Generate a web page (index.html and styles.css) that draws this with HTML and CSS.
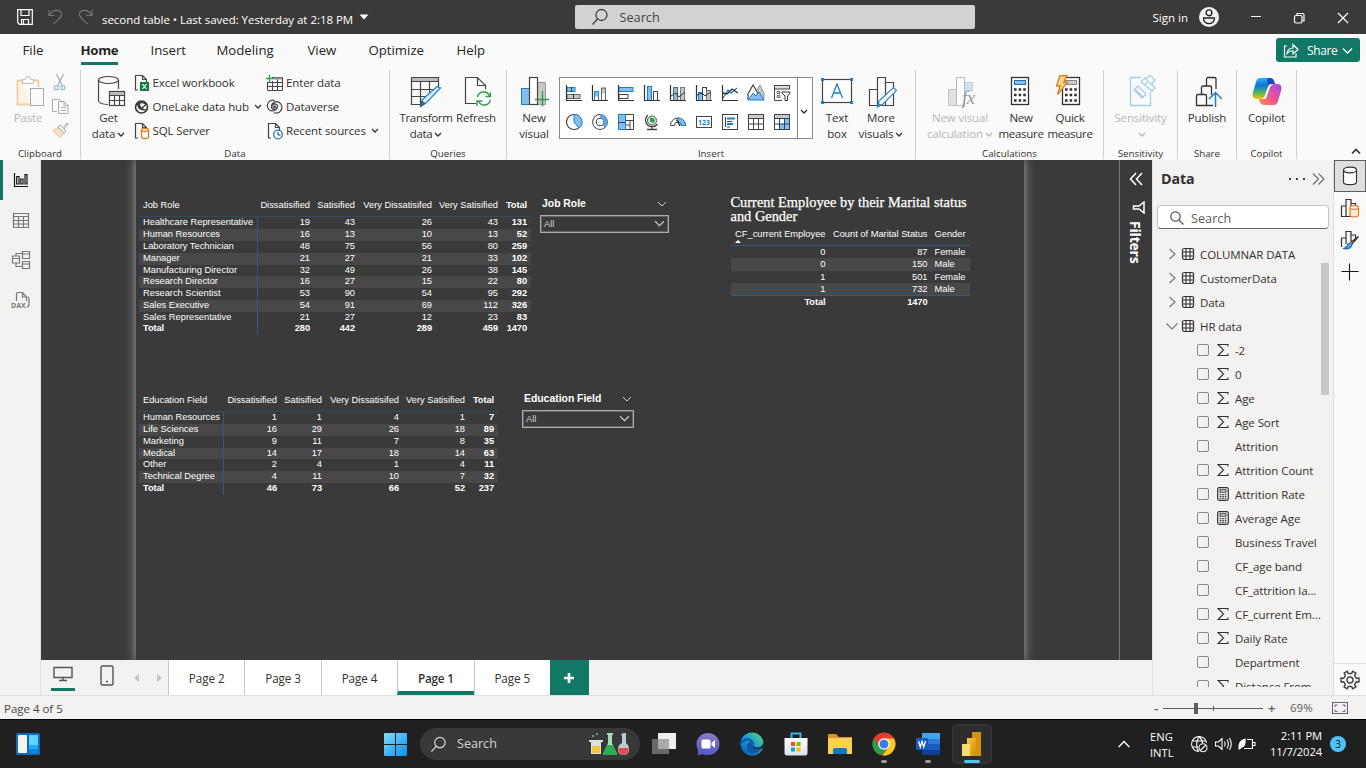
FILE: index.html
```html
<!DOCTYPE html>
<html lang="en">
<head>
<meta charset="utf-8">
<title>second table</title>
<link rel="stylesheet" href="styles.css">
</head>
<body>
<svg class="defs" width="0" height="0">
  <defs>
    <symbol id="down" viewBox="0 0 8 6"><path d="M1 1l3 3 3-3" fill="none" stroke="currentColor" stroke-width="1.3"/></symbol>
    <symbol id="wide" viewBox="0 0 10 7"><path d="M1 1l4 4 4-4" fill="none" stroke="currentColor" stroke-width="1"/></symbol>
    <symbol id="lens" viewBox="0 0 18 18"><circle cx="10.5" cy="7" r="5.5" fill="none" stroke="currentColor" stroke-width="1.3"/><path d="M6.5 11L1.5 16.5" stroke="currentColor" stroke-width="1.4"/></symbol>
    <symbol id="grid" viewBox="0 0 14 14"><rect x="1.500" y="1.500" width="11" height="11" rx="2" fill="none" stroke="currentColor" stroke-width="1.2"/><path d="M1 5h12M1 9h12M5 1v12M9 1v12" stroke="currentColor" stroke-width="1.1"/></symbol>
    <symbol id="sigma" viewBox="0 0 12 13"><path d="M11 3V1H1l5.500 5.500L1 12h10v-2" fill="none" stroke="currentColor" stroke-width="1.1"/></symbol>
    <symbol id="calc" viewBox="0 0 12 14"><rect x=".7" y=".7" width="10.600" height="12.600" rx="1.500" fill="none" stroke="currentColor" stroke-width="1.2"/><rect x="3" y="2.800" width="6" height="2.400" fill="none" stroke="currentColor"/><path d="M2.700 7.500h1.600M5.200 7.500h1.600M7.700 7.500h1.600M2.700 9.400h1.600M5.200 9.400h1.600M7.700 9.400h1.600M2.700 11.300h1.600M5.200 11.300h1.600M7.700 11.300h1.600" stroke="currentColor" stroke-width="1.2"/></symbol>
    <symbol id="doc" viewBox="0 0 16 18"><path d="M4 16H1.500V1.500H8.500L12.500 5.500V8M8.500 1.500V5.500H12.500" fill="none" stroke="#444" stroke-width="1.2"/></symbol>
    <symbol id="axes" viewBox="0 0 18 18"><path d="M1.500 1V16.500H17" fill="none" stroke="#333" stroke-width="1.2"/></symbol>
    <linearGradient id="gWin" x1="0" y1="0" x2="1" y2="1"><stop offset="0" stop-color="#7fe0ff"/><stop offset="1" stop-color="#0a8cf0"/></linearGradient>
    <linearGradient id="gCopA" x1="0" y1="0" x2="0" y2="1"><stop offset="0" stop-color="#20b8f5"/><stop offset=".35" stop-color="#1575d8"/><stop offset=".65" stop-color="#40b070"/><stop offset="1" stop-color="#f5c400"/></linearGradient>
    <linearGradient id="gCopB" x1="1" y1="0" x2="0" y2="1"><stop offset="0" stop-color="#9a4cf0"/><stop offset=".5" stop-color="#ee5098"/><stop offset="1" stop-color="#ff8a45"/></linearGradient>
    <linearGradient id="gEdge" x1="0" y1="1" x2="1" y2="0"><stop offset="0" stop-color="#0b4fa5"/><stop offset=".5" stop-color="#169ade"/><stop offset="1" stop-color="#62df65"/></linearGradient>
    <linearGradient id="gChat" x1="0" y1="0" x2="0" y2="1"><stop offset="0" stop-color="#8f78c8"/><stop offset="1" stop-color="#5358c8"/></linearGradient>
    <linearGradient id="gStore" x1="0" y1="0" x2="0" y2="1"><stop offset="0" stop-color="#fff"/><stop offset="1" stop-color="#d8e0e8"/></linearGradient>
    <linearGradient id="gPbi" x1="0" y1="0" x2="1" y2="1"><stop offset="0" stop-color="#f5cb3c"/><stop offset="1" stop-color="#d48a0c"/></linearGradient>
  </defs>
</svg>

<header class="titlebar">
  <svg class="t-save" width="16" height="16" viewBox="0 0 16 16" fill="none" stroke="#fff" stroke-width="1.2"><path d="M.700.700H15.300V15.300H2.500L.700 13.500ZM4 .700V6.500H12V.700M4.500 15V10.500H11.500V15M6.500 11V15"/></svg>
  <svg class="t-undo" width="15" height="16" viewBox="0 0 15 16" fill="none" stroke="#77756f" stroke-width="1.2"><path d="M1 1V6.500H6.500M1.300 6.200C5-.5 13 .5 13.600 5C13.900 9 8 12 5.500 15"/></svg>
  <svg class="t-redo" width="15" height="16" viewBox="0 0 15 16" fill="none" stroke="#77756f" stroke-width="1.2"><path d="M14 1V6.500H8.500M13.700 6.200C10-.5 2 .5 1.400 5C1.100 9 7 12 9.500 15"/></svg>
  <span class="t-name">second table • Last saved: Yesterday at 2:18 PM</span>
  <svg width="10" height="6" viewBox="0 0 10 6"><path d="M.5.500H9.500L5 5.500Z" fill="#fff"/></svg>
  <div class="t-search"><svg width="18" height="18"><use href="#lens"/></svg><span>Search</span></div>
  <span class="t-sign">Sign in</span>
  <svg class="t-avatar" width="20" height="20" viewBox="0 0 20 20"><circle cx="10" cy="10" r="10" fill="#f3f2f1"/><circle cx="10" cy="5.800" r="2.900" fill="none" stroke="#222" stroke-width="1.400"/><path d="M4.500 11H15.500C15.500 18.500 4.500 18.500 4.500 11Z" fill="none" stroke="#222" stroke-width="1.400"/></svg>
  <svg class="t-win" width="98" height="14" viewBox="0 0 98 14" fill="none" stroke="#fff" stroke-width="1.200"><path d="M0 6.500H10M87 3L97 13M97 3L87 13"/><rect x="43.500" y="5.500" width="7.500" height="7.500" rx="1.500"/><path d="M46 5V3.500H51.500Q53 3.500 53 5V11H51.500"/></svg>
</header>

<nav class="tabs">
  <span>File</span><span><b>Home</b></span><span>Insert</span><span>Modeling</span><span>View</span><span>Optimize</span><span>Help</span>
  <button class="share"><svg width="16" height="16" viewBox="0 0 16 16" fill="none" stroke="#fff" stroke-width="1.200"><path d="M4 3H1.500V14H13V10.500M4 10.500C4.500 6.500 7 5 10 5V1.500L15 6.500L10 11V7.800C7 7.500 5.500 8.500 4 10.500Z"/></svg><span>Share</span><svg width="11" height="8" viewBox="0 0 11 8"><path d="M1 1.500L5.500 6L10 1.500" fill="none" stroke="#fff" stroke-width="1.300"/></svg></button>
</nav>

<section class="ribbon">
  <div class="group g-clip">
    <div class="tools">
      <div class="big off"><svg width="30" height="34" viewBox="0 0 30 34"><path d="M8 5.500H2.500V29.500H15M19 5.500H23.500V12" fill="#fdf4e6" stroke="#f0cf9c" stroke-width="1.800"/><path d="M7.500 8.500V4.500H10Q10.500 1.500 13 1.500T16 4.500H18.500V8.500Z" fill="#fafafa" stroke="#bbb"/><rect x="15.500" y="13.500" width="13" height="17" fill="#fafafa" stroke="#a8a8a8"/></svg><span>Paste</span></div>
      <div class="mini">
        <svg width="14" height="17" viewBox="0 0 14 17" fill="none"><path d="M3.500 0L9.500 12M10.500 0L4.500 12" stroke="#aaa" stroke-width="1.200"/><rect x="1.500" y="12" width="3.500" height="3.500" stroke="#91c3e4" stroke-width="1.300"/><rect x="8" y="12" width="3.500" height="3.500" stroke="#91c3e4" stroke-width="1.300"/></svg>
        <svg width="17" height="17" viewBox="0 0 17 17" fill="none" stroke="#aaa"><path d="M5 13.500H.500V1.500H7.500L9 3M6.500 3.500H12L16 7.500V15.500H6.500ZM12 3.500V7.500H16M9 9.500H14M9 12.500H14"/></svg>
        <svg width="17" height="17" viewBox="0 0 17 17" fill="none"><path d="M1 8.500L6 5.500L12 11L7.500 15.500Z" fill="#f8dfc5" stroke="#eec08f"/><path d="M6 5L8 3L14 9L12 11ZM11 5.500L15 1L16 2L12 7" stroke="#aaa"/></svg>
      </div>
    </div>
    <div class="caption">Clipboard</div>
  </div>

  <div class="group g-data">
    <div class="tools">
      <div class="big getdata"><svg width="30" height="34" viewBox="0 0 30 34" fill="none" stroke="#444" stroke-width="1.200"><path d="M2.500 5V26Q3 29 12 29.500M22.500 5V14"/><ellipse cx="12.500" cy="5" rx="10" ry="3.500"/><rect x="13.500" y="16.500" width="15" height="14" fill="#fff"/><path d="M14 18.500H28" stroke="#bbb" stroke-width="3"/><path d="M13 20.500H28M13 25.500H28M18.500 20V31M23.500 20V31"/></svg><span>Get<br>data<svg class="dn"><use href="#down"/></svg></span></div>
      <div class="list first">
        <div><svg width="16" height="18"><use href="#doc"/><rect x="6" y="8" width="9" height="9" fill="#107c41"/><path d="M8.500 10L12.500 15M12.500 10L8.500 15" stroke="#fff" stroke-width="1.200"/></svg><span>Excel workbook</span></div>
        <div><svg width="16" height="16" viewBox="0 0 16 16" fill="none" stroke="#333" stroke-width="1.300"><circle cx="7.500" cy="8" r="6" stroke-width="1.600"/><path d="M4 4.500C3.500 9.500 8 12 12.500 10.500M2.500 6.500C5 2.500 10 3 12 5.500L7.500 9.500M6 3C4.500 6 6 9 9.500 10"/></svg><span>OneLake data hub</span><svg class="dn"><use href="#down"/></svg></div>
        <div><svg width="16" height="18"><use href="#doc"/><path d="M7.500 8V15C7.500 17 14.500 17 14.500 15V8" fill="#fff" stroke="#e07b20" stroke-width="1.300"/><ellipse cx="11" cy="8" rx="3.500" ry="1.500" fill="#fff" stroke="#e07b20" stroke-width="1.300"/></svg><span>SQL Server</span></div>
      </div>
      <div class="list second">
        <div><svg width="17" height="17" viewBox="0 0 17 17" fill="none" stroke="#444"><path d="M6 2.500H16.500V15.500H1.500V7M1 7.500H16M1 11.500H16M6.500 6V15M11.500 4V15"/><path d="M7 3.500H16" stroke="#999" stroke-width="2"/><path d="M3.500 0V8M0 3.500H7.500" stroke="#2f9e4a" stroke-width="1.400"/></svg><span>Enter data</span></div>
        <div><svg width="17" height="16" viewBox="0 0 17 16" fill="none" stroke="#444" stroke-width="1.200"><path d="M9 1.500C3-.5-.5 6 2.500 10C5 13.500 11 12 11.500 7.500C11.500 4 6 4 6 7.500M8 13.500C14 16 18 9 14.500 4.500C11.500 1 6 3 5.500 7C5 11 11 11.500 11 8"/><circle cx="8.500" cy="7.800" r="1"/></svg><span>Dataverse</span></div>
        <div><svg width="17" height="18"><use href="#doc" x="1" width="16" height="18"/><circle cx="12" cy="12.500" r="4.300" fill="#fff" stroke="#1c7fc9" stroke-width="1.300"/><path d="M12 10V13H14.500" fill="none" stroke="#333"/></svg><span>Recent sources</span><svg class="dn"><use href="#down"/></svg></div>
      </div>
    </div>
    <div class="caption">Data</div>
  </div>

  <div class="group g-query">
    <div class="tools">
      <div class="big w56"><svg width="32" height="34" viewBox="0 0 32 34" fill="none" stroke="#444"><path d="M2 4.500H28" stroke="#bbb" stroke-width="4"/><path d="M1.500 2.500H28.500V15M1.500 2.500V29.500H14M1.500 6.500H28.500M1.500 14.500H24M1.500 21.500H16M10.500 6V29M19.500 6V18" stroke-width="1.200"/><path d="M12 25L27 11.500L30.500 13L16 28L10.500 31.500Z" fill="#d9effc" stroke="#2b88c8" stroke-width="1.300"/><path d="M12 26L15 28.500L10.500 31Z" fill="#2b88c8"/></svg><span>Transform<br>data<svg class="dn"><use href="#down"/></svg></span></div>
      <div class="big w44"><svg width="30" height="34" viewBox="0 0 30 34" fill="none"><path d="M15 28.500H4.500V2.500H16.500L24.500 10.500V14M16.500 2.500V10.500H24.500" stroke="#444" stroke-width="1.200"/><path d="M16.500 22C17.500 16 26 15 28.500 21M29.500 17V21.500H24.500M29.500 25C28 31 20 32 17.500 26M16 31V26H21.500" stroke="#2f9e4a" stroke-width="1.400"/></svg><span>Refresh</span></div>
    </div>
    <div class="caption">Queries</div>
  </div>

  <div class="group g-insert">
    <div class="tools">
      <div class="big w40"><svg width="30" height="34" viewBox="0 0 30 34"><path d="M18.500 7.500H26.500V29.500H17Z" fill="#c8c6c4" stroke="#999"/><rect x="2.500" y="13.500" width="8" height="16" fill="#83beec" stroke="#1c7fc9"/><rect x="10.500" y="2.500" width="8" height="27" fill="#fff" stroke="#444" stroke-width="1.200"/><path d="M23.500 16V31.500M16 24.500H30" stroke="#2f9e4a" stroke-width="1.400"/></svg><span>New<br>visual</span></div>
      <div class="gallery">
        <div class="cells">
          <svg viewBox="0 0 18 18"><rect x="2" y="3.500" width="8" height="4" fill="#83beec" stroke="#1c7fc9"/><rect x="2" y="10.500" width="13" height="4" fill="#c8c6c4" stroke="#666"/><path d="M6.500 3V8M8.500 10V15" stroke="#333"/><use href="#axes"/></svg>
          <svg viewBox="0 0 18 18"><rect x="3.500" y="7.500" width="4" height="9" fill="#83beec" stroke="#1c7fc9"/><rect x="10.500" y="4" width="4" height="12" fill="#c8c6c4" stroke="#666"/><path d="M4 12.500H7V16H4ZM11 9.500H14V16H11Z" fill="#fff"/><use href="#axes"/></svg>
          <svg viewBox="0 0 18 18"><rect x="2" y="3.500" width="14" height="4" fill="#83beec" stroke="#1c7fc9"/><rect x="2" y="10.500" width="9" height="4" fill="#fff" stroke="#444"/><use href="#axes"/></svg>
          <svg viewBox="0 0 18 18"><rect x="4.500" y="2.500" width="4" height="14" fill="#83beec" stroke="#1c7fc9"/><rect x="10.500" y="7.500" width="4" height="9" fill="#fff" stroke="#444"/><use href="#axes"/></svg>
          <svg viewBox="0 0 18 18"><rect x="4.500" y="3.500" width="4" height="13" fill="#83beec" stroke="#666"/><rect x="11.500" y="3.500" width="4" height="13" fill="#c8c6c4" stroke="#777"/><path d="M2 12L7 9L10 13L16 8" fill="none" stroke="#333"/><use href="#axes"/></svg>
          <svg viewBox="0 0 18 18"><rect x="3.500" y="8.500" width="4" height="8" fill="#83beec" stroke="#1c7fc9"/><rect x="7.500" y="3.500" width="4" height="13" fill="#fff" stroke="#444"/><rect x="11.500" y="6.500" width="4" height="10" fill="#c8c6c4" stroke="#777"/><path d="M2 11L7 9L10 12L16 8" fill="none" stroke="#333"/><use href="#axes"/></svg>
          <svg viewBox="0 0 18 18"><path d="M2 14L7 6L10 9L16 4" fill="none" stroke="#1c7fc9" stroke-width="1.300"/><path d="M2 9L6 10L11 5L17 9" fill="none" stroke="#333" stroke-width="1.300"/><use href="#axes"/></svg>
          <svg viewBox="0 0 18 18"><path d="M7 10L13 1L17 9V16Z" fill="#c8c6c4" stroke="#999"/><path d="M1 16V10L6 1L12 11" fill="#fff" stroke="#444" stroke-width="1.200"/><path d="M1 16L6 9L9 12L12 8L17 16Z" fill="#83beec" stroke="#1c7fc9"/></svg>
          <svg viewBox="0 0 18 18"><rect x="1.500" y="1.500" width="15" height="3.500" fill="#ddd" stroke="#444"/><path d="M1.500 5V16.500H9" fill="none" stroke="#444"/><path d="M4 7.500H7V9.500H4ZM4 11.500H7V13.500H4Z" fill="#ccc" stroke="#777"/><path d="M9 8H17V9L14.500 12V16.500H12V12L9 9Z" fill="#fff" stroke="#333"/></svg>
          <svg viewBox="0 0 18 18"><circle cx="9" cy="9" r="7.500" fill="#fff" stroke="#444" stroke-width="1.200"/><path d="M9 1.500A7.500 7.500 0 0 1 14 15L9 9Z" fill="#83beec" stroke="#1c7fc9"/></svg>
          <svg viewBox="0 0 18 18"><circle cx="9" cy="9" r="5.600" fill="none" stroke="#444" stroke-width="4.600"/><circle cx="9" cy="9" r="5.600" fill="none" stroke="#fff" stroke-width="2.600"/><path d="M9 3.400A5.600 5.600 0 0 1 12.500 13.400" fill="none" stroke="#58a6e0" stroke-width="4.200"/></svg>
          <svg viewBox="0 0 18 18"><rect x="1.500" y="1.500" width="7" height="15" fill="#83beec" stroke="#1c7fc9"/><path d="M9 1.500H16.500V16.500H9M9 7.500H16.500M13 7.500V16.500M9 12H13M1.500 9.500H8.500" fill="none" stroke="#444"/></svg>
          <svg viewBox="0 0 18 18"><circle cx="9" cy="7.500" r="4.500" fill="#cfead6" stroke="#555"/><path d="M7 4.500L11 5.500L12 8L10 10L7 8.500Z" fill="#2f9e4a"/><path d="M5 2A6.600 6.600 0 1 0 14.500 11M9 14V17M4 16.500H14" fill="none" stroke="#444" stroke-width="1.300"/></svg>
          <svg viewBox="0 0 18 18"><path d="M1.500 12.500A7.500 7.500 0 0 1 16.500 12.500H12.500A3.500 3.500 0 0 0 5.500 12.500Z" fill="#fff" stroke="#444"/><path d="M9 5A7.500 7.500 0 0 1 16.500 12.500H12.500A3.500 3.500 0 0 0 9 9Z" fill="#83beec" stroke="#1c7fc9"/><path d="M7.500 6.500L11 13" stroke="#333" stroke-width="1.500"/></svg>
          <svg viewBox="0 0 18 18"><rect x="1.500" y="3.500" width="15" height="11" fill="#fff" stroke="#444"/><text x="9" y="12" class="n123">123</text></svg>
          <svg viewBox="0 0 18 18"><rect x="1.500" y="1.500" width="15" height="15" fill="#fff" stroke="#444"/><path d="M4.500 4V14M6 8.500H11M6 14H9" stroke="#444"/><path d="M6 5.500H14M6 11H12" stroke="#1c7fc9" stroke-width="2"/></svg>
          <svg viewBox="0 0 18 18"><rect x="1.500" y="1.500" width="15" height="15" fill="#fff" stroke="#444"/><path d="M2 3.500H16" stroke="#ccc" stroke-width="3"/><path d="M1 5.500H17M1 11H17M6.500 5V17M11.500 5V17" stroke="#444"/></svg>
          <svg viewBox="0 0 18 18"><rect x="1.500" y="1.500" width="15" height="15" fill="#fff" stroke="#444"/><path d="M2 3.500H16" stroke="#ccc" stroke-width="3"/><path d="M11.500 6H16V16H6.500V11H11.500Z" fill="#83beec"/><path d="M1 5.500H17M1 11H17M6.500 5V17M11.500 5V17" stroke="#246"/></svg>
        </div>
        <div class="more"><svg class="dn"><use href="#down"/></svg></div>
      </div>
      <div class="big w36"><svg width="32" height="34" viewBox="0 0 32 34"><rect x="1.500" y="4.500" width="29" height="23" fill="#fff" stroke="#444" stroke-width="1.200"/><path d="M0 3h3v3H0zM29 3h3v3h-3zM0 26h3v3H0zM29 26h3v3h-3z" fill="#1c7fc9"/><path d="M10.500 23L16 9L21.500 23M12.500 18H19.500" fill="none" stroke="#1c7fc9" stroke-width="1.300"/></svg><span>Text<br>box</span></div>
      <div class="big w50"><svg width="32" height="34" viewBox="0 0 32 34" fill="none" stroke="#444" stroke-width="1.200"><path d="M4.500 14.500H12.500V30.500H4.500ZM12.500 2.500H20.500V30.500H12.500ZM20.500 7.500H28.500V30.500H20.500"/><path d="M14 26L28.500 12.500L31.500 15.500L18 29L12.500 32Z" fill="#fff" stroke="#2b88c8"/><path d="M13.500 28L17 30L12.500 32Z" fill="#2b88c8" stroke="none"/></svg><span>More<br>visuals<svg class="dn"><use href="#down"/></svg></span></div>
    </div>
    <div class="caption">Insert</div>
  </div>

  <div class="group g-calc">
    <div class="tools">
      <div class="big off w68"><svg width="30" height="34" viewBox="0 0 30 34"><path d="M19.500 7.500H27.500V16H19.500Z" fill="#cfe3f3" stroke="#b5d3ea"/><rect x="3.500" y="14.500" width="8" height="16" fill="#e1e1e1" stroke="#c5c5c5"/><rect x="11.500" y="2.500" width="8" height="28" fill="#fff" stroke="#bbb"/><text x="17" y="29" class="fx">fx</text></svg><span>New visual<br>calculation<svg class="dn"><use href="#down"/></svg></span></div>
      <div class="big w46 ml4"><svg width="22" height="34" viewBox="0 0 22 34"><rect x="1.500" y="2.500" width="17" height="27" fill="#fff" stroke="#333" stroke-width="1.300"/><rect x="4.500" y="5.500" width="11" height="4" fill="#83beec" stroke="#1c6fb9"/><path d="M4 14.500h12M4 20h12M4 25.500h12" stroke="#333" stroke-width="2.600" stroke-dasharray="2.600 2"/></svg><span>New<br>measure</span></div>
      <div class="big w46 ml3"><svg width="28" height="34" viewBox="0 0 28 34"><rect x="6.500" y="2.500" width="17" height="27" fill="#fff" stroke="#333" stroke-width="1.300"/><rect x="9.500" y="5.500" width="11" height="4" fill="#ccc" stroke="#888"/><path d="M9 14.500h12M9 20h12M9 25.500h12" stroke="#333" stroke-width="2.600" stroke-dasharray="2.600 2"/><path d="M4 .5H11L7.500 7.500H11.500L1.500 19.500L4 11H.500Z" fill="#fbd68a" stroke="#e07b20" stroke-width="1.300"/></svg><span>Quick<br>measure</span></div>
    </div>
    <div class="caption">Calculations</div>
  </div>

  <div class="group g-sens">
    <div class="tools"><div class="big off fill"><svg width="30" height="34" viewBox="0 0 30 34" fill="none" stroke="#a5cfe8" stroke-width="1.300"><path d="M15 2.500H4.500V30.500H24.500V17"/><path d="M8 15L12 11L20 19L16 23ZM10 15L17 22M15 7L19 3L22 6L19 10ZM19 10L26 16L29 13L23 7M20 4L24 0L29 5L26 9"/></svg><span>Sensitivity<br><svg class="dn"><use href="#down"/></svg></span></div></div>
    <div class="caption">Sensitivity</div>
  </div>
  <div class="group g-share">
    <div class="tools"><div class="big fill"><svg width="30" height="34" viewBox="0 0 30 34" fill="none" stroke="#333" stroke-width="1.300"><path d="M14 30.500H4.500V21Q4.500 19.500 6 19.500H13Q14.500 19.500 14.500 21V30.500H21M9.500 19V12.500Q9.500 11 11 11H18Q19.500 11 19.500 12.500V20M14.500 11V4Q14.500 2.500 16 2.500H22.500Q24 2.500 24 4V14"/><path d="M23.500 32V17.500M17 24L23.500 17.500L30 24" stroke="#1c7fc9" stroke-width="1.500"/></svg><span>Publish</span></div></div>
    <div class="caption">Share</div>
  </div>
  <div class="group g-copilot">
    <div class="tools"><div class="big fill"><svg width="32" height="34" viewBox="0 0 32 34"><path d="M9 3H19Q22 3 23 6L24 9H20Q18 9 17 12L13.500 22Q12.500 24 9 24H6Q0 24 2 17L5 7Q6 3 9 3Z" fill="url(#gCopA)"/><path d="M23 30H13Q10 30 9 27L8 24H12Q14 24 15 21L18.500 11Q19.500 9 23 9H26Q32 9 30 16L27 26Q26 30 23 30Z" fill="url(#gCopB)"/><path d="M16 3H19Q22 3 23 6L24 9H20Q18 9 17 12Z" fill="#1b49c0"/><path d="M18 9.500H23L19.500 11L15 23.500Q14.500 24 10 24Q13 23.500 14 21Z" fill="#fafafa"/></svg><span>Copilot</span></div></div>
    <div class="caption">Copilot</div>
  </div>
  <div class="collapse"><svg width="10" height="7" viewBox="0 0 10 7"><path d="M1 5.500L5 1.500L9 5.500" fill="none" stroke="#333" stroke-width="1.600"/></svg></div>
</section>

<main class="work">
  <aside class="rail">
    <div class="cur"><svg width="16" height="16" viewBox="0 0 16 16" fill="none" stroke="#111" stroke-width="1.200"><path d="M1.500 1V14.500H15M3.700 4.500H6V12H3.700ZM7.800 7H10V12H7.800ZM12 2.500H14V12H12Z"/></svg></div>
    <div><svg width="18" height="17" viewBox="0 0 18 17" fill="none" stroke="#777" stroke-width="1.200"><path d="M1.500 1.500H16.500V15.500H1.500ZM1 4.500H17M1 8.500H17M1 12H17M6.500 4V16M11.500 4V16"/></svg></div>
    <div><svg width="20" height="20" viewBox="0 0 20 20" fill="none" stroke="#777" stroke-width="1.200"><path d="M1.500 6H8.500V13H1.500ZM1.500 8.500H8.500M11.500 1.500H18.500V8.500H11.500ZM11.500 4H18.500M11.500 11.500H18.500V18.500H11.500ZM11.500 14H18.500M5 6V3.500H11.500M5 13V16.500H11.500"/></svg></div>
    <div><svg width="22" height="18" viewBox="0 0 22 18" fill="none" stroke="#777" stroke-width="1.200"><path d="M6.500 10V3Q6.500 1.500 8 1.500H12.500L16.500 6V10M12.500 1.500V6H16.500M18 5.500Q19 7 19 9V13Q19 16 16.500 16.500"/><text x="1" y="16.500" class="dax">DAX</text></svg></div>
  </aside>

  <div class="center">
    <div class="stage">
      <div class="canvas"><div class="page">
        <table class="visual grid jobs">
          <colgroup><col><col><col><col><col><col></colgroup>
          <thead><tr><th>Job Role</th><th>Dissatisified</th><th>Satisified</th><th>Very Dissatisifed</th><th>Very Satisified</th><th>Total</th></tr></thead>
          <tbody>
          <tr><td>Healthcare Representative</td><td>19</td><td>43</td><td>26</td><td>43</td><td>131</td></tr>
          <tr><td>Human Resources</td><td>16</td><td>13</td><td>10</td><td>13</td><td>52</td></tr>
          <tr><td>Laboratory Technician</td><td>48</td><td>75</td><td>56</td><td>80</td><td>259</td></tr>
          <tr><td>Manager</td><td>21</td><td>27</td><td>21</td><td>33</td><td>102</td></tr>
          <tr><td>Manufacturing Director</td><td>32</td><td>49</td><td>26</td><td>38</td><td>145</td></tr>
          <tr><td>Research Director</td><td>16</td><td>27</td><td>15</td><td>22</td><td>80</td></tr>
          <tr><td>Research Scientist</td><td>53</td><td>90</td><td>54</td><td>95</td><td>292</td></tr>
          <tr><td>Sales Executive</td><td>54</td><td>91</td><td>69</td><td>112</td><td>326</td></tr>
          <tr><td>Sales Representative</td><td>21</td><td>27</td><td>12</td><td>23</td><td>83</td></tr>
          <tr class="sum"><td>Total</td><td>280</td><td>442</td><td>289</td><td>459</td><td>1470</td></tr>
          </tbody>
        </table>
        <div class="visual slicer s-job">
          <div class="s-head"><span>Job Role</span><svg width="10" height="7"><use href="#wide"/></svg></div>
          <div class="s-box"><span>All</span><svg width="11" height="8"><use href="#wide"/></svg></div>
        </div>
        <div class="visual marital">
          <h2>Current Employee by their Marital status<br>and Gender</h2>
          <table class="flat">
            <colgroup><col><col><col></colgroup>
            <thead><tr><th>CF_current Employee<i></i></th><th>Count of Marital Status</th><th>Gender</th></tr></thead>
            <tbody>
            <tr><td>0</td><td>87</td><td>Female</td></tr>
            <tr><td>0</td><td>150</td><td>Male</td></tr>
            <tr><td>1</td><td>501</td><td>Female</td></tr>
            <tr><td>1</td><td>732</td><td>Male</td></tr>
            <tr class="sum"><td>Total</td><td>1470</td><td></td></tr>
            </tbody>
          </table>
        </div>
        <table class="visual grid edu">
          <colgroup><col><col><col><col><col><col></colgroup>
          <thead><tr><th>Education Field</th><th>Dissatisified</th><th>Satisified</th><th>Very Dissatisifed</th><th>Very Satisified</th><th>Total</th></tr></thead>
          <tbody>
          <tr><td>Human Resources</td><td>1</td><td>1</td><td>4</td><td>1</td><td>7</td></tr>
          <tr><td>Life Sciences</td><td>16</td><td>29</td><td>26</td><td>18</td><td>89</td></tr>
          <tr><td>Marketing</td><td>9</td><td>11</td><td>7</td><td>8</td><td>35</td></tr>
          <tr><td>Medical</td><td>14</td><td>17</td><td>18</td><td>14</td><td>63</td></tr>
          <tr><td>Other</td><td>2</td><td>4</td><td>1</td><td>4</td><td>11</td></tr>
          <tr><td>Technical Degree</td><td>4</td><td>11</td><td>10</td><td>7</td><td>32</td></tr>
          <tr class="sum"><td>Total</td><td>46</td><td>73</td><td>66</td><td>52</td><td>237</td></tr>
          </tbody>
        </table>
        <div class="visual slicer s-edu">
          <div class="s-head"><span>Education Field</span><svg width="10" height="7"><use href="#wide"/></svg></div>
          <div class="s-box"><span>All</span><svg width="11" height="8"><use href="#wide"/></svg></div>
        </div>
      </div></div>
      <div class="filters">
        <svg width="14" height="14" viewBox="0 0 14 14" fill="none" stroke="#fff" stroke-width="1.500"><path d="M7 1L1.500 7L7 13M13 1L7.500 7L13 13"/></svg>
        <svg width="13" height="13" viewBox="0 0 13 13" fill="none" stroke="#fff" stroke-width="1.500"><path d="M12 1V12L7 8H1.500V5H7Z"/></svg>
        <span>Filters</span>
      </div>
    </div>
    <div class="pages">
      <div class="dev on"><svg width="20" height="16" viewBox="0 0 20 16" fill="none" stroke="#555" stroke-width="1.400"><path d="M1 1.500H19V11.500H1ZM6 14.500H14M10 12V14"/></svg></div>
      <div class="dev"><svg width="14" height="21" viewBox="0 0 14 21" fill="none" stroke="#555" stroke-width="1.400"><rect x="1" y="1" width="12" height="19" rx="1.500"/><path d="M6 16.500H8"/></svg></div>
      <svg class="arrows" width="28" height="8" viewBox="0 0 28 8" fill="#c8c6c4"><path d="M5 0V8L0 4ZM23 0V8L28 4Z"/></svg>
      <div class="pt">Page 2</div><div class="pt">Page 3</div><div class="pt">Page 4</div><div class="pt sel">Page 1</div><div class="pt">Page 5</div>
      <div class="add"><svg width="12" height="12" viewBox="0 0 12 12"><path d="M6 1V11M1 6H11" stroke="#fff" stroke-width="2.600"/></svg></div>
    </div>
  </div>

  <aside class="data">
    <div class="d-head"><b>Data</b><svg width="16" height="4" viewBox="0 0 16 4" fill="#444"><path d="M0 1h2v2H0zM7 1h2v2H7zM14 1h2v2h-2z"/></svg><svg width="13" height="12" viewBox="0 0 13 12" fill="none" stroke="#666" stroke-width="1.100"><path d="M1 0.500L6.500 6L1 11.500M6.500 .5L12 6L6.500 11.500"/></svg></div>
    <div class="d-search"><svg width="14" height="14" viewBox="0 0 14 14" fill="none" stroke="#555" stroke-width="1.200"><circle cx="5.500" cy="5.500" r="4.700"/><path d="M9 9L13.500 13.500"/></svg><span>Search</span></div>
    <div class="d-body">
      <div class="tree">
        <div class="tb"><svg class="ch" viewBox="0 0 12 12"><path d="M3.500 1L9 6L3.500 11"/></svg><svg class="tg"><use href="#grid"/></svg><span>COLUMNAR DATA</span></div>
        <div class="tb"><svg class="ch" viewBox="0 0 12 12"><path d="M3.500 1L9 6L3.500 11"/></svg><svg class="tg"><use href="#grid"/></svg><span>CustomerData</span></div>
        <div class="tb"><svg class="ch" viewBox="0 0 12 12"><path d="M3.500 1L9 6L3.500 11"/></svg><svg class="tg"><use href="#grid"/></svg><span>Data</span></div>
        <div class="tb"><svg class="ch" viewBox="0 0 12 12"><path d="M.5 3.500L6 9L11.500 3.500"/></svg><svg class="tg"><use href="#grid"/></svg><span>HR data</span></div>
        <div class="fd"><i></i><svg><use href="#sigma"/></svg><span>-2</span></div>
        <div class="fd"><i></i><svg><use href="#sigma"/></svg><span>0</span></div>
        <div class="fd"><i></i><svg><use href="#sigma"/></svg><span>Age</span></div>
        <div class="fd"><i></i><svg><use href="#sigma"/></svg><span>Age Sort</span></div>
        <div class="fd"><i></i><svg></svg><span>Attrition</span></div>
        <div class="fd"><i></i><svg><use href="#sigma"/></svg><span>Attrition Count</span></div>
        <div class="fd"><i></i><svg><use href="#calc"/></svg><span>Attrition Rate</span></div>
        <div class="fd"><i></i><svg><use href="#calc"/></svg><span>Average Age</span></div>
        <div class="fd"><i></i><svg></svg><span>Business Travel</span></div>
        <div class="fd"><i></i><svg></svg><span>CF_age band</span></div>
        <div class="fd"><i></i><svg></svg><span>CF_attrition la...</span></div>
        <div class="fd"><i></i><svg><use href="#sigma"/></svg><span>CF_current Em...</span></div>
        <div class="fd"><i></i><svg><use href="#sigma"/></svg><span>Daily Rate</span></div>
        <div class="fd"><i></i><svg></svg><span>Department</span></div>
        <div class="fd"><i></i><svg><use href="#sigma"/></svg><span>Distance From</span></div>
      </div>
      <div class="bar"></div>
    </div>
  </aside>

  <aside class="panes">
    <div class="p-on"><svg width="16" height="20" viewBox="0 0 16 20" fill="#fff" stroke="#333" stroke-width="1.200"><path d="M1.500 4V16C1.500 19.500 14.500 19.500 14.500 16V4"/><ellipse cx="8" cy="4" rx="6.500" ry="2.800"/></svg></div>
    <div><svg width="20" height="20" viewBox="0 0 20 20" fill="none" stroke="#333" stroke-width="1.200"><path d="M1.500 8H6V18.500H1.500ZM6 1.500H11V18.500H6ZM11 5.500H15.500V8"/><path d="M10 10V17C10 19.500 18.500 19.500 18.500 17V10" fill="#fce9d6" stroke="#e07b20"/><ellipse cx="14.200" cy="9.500" rx="4.200" ry="1.800" fill="#fff" stroke="#e07b20"/></svg></div>
    <div><svg width="20" height="20" viewBox="0 0 20 20" fill="none" stroke="#333" stroke-width="1.200"><path d="M1.500 17V8H6M6 14V1.500H11V12M11 5H15.500V8M18.500 6.500L12 14M18.500 6.500L10.500 12.500"/><path d="M3 18.500Q7 18 8 14Q11 12 12 15Q10 20 3 18.500Z" fill="#5ea9e0" stroke="#1c6fb9"/></svg></div>
    <div><svg width="18" height="18" viewBox="0 0 18 18"><path d="M8.500 .5V17.500M.5 8.500H17.500" stroke="#111" stroke-width="1.100"/></svg></div>
    <div class="gear"><svg width="20" height="20" viewBox="0 0 20 20" fill="none" stroke="#444" stroke-width="1.400"><path d="M7.500 1.200L8.200 3.500H11.800L12.500 1.200L16 3.200L14.500 5.300L16.300 8.300L19 8V12L16.300 11.700L14.500 14.700L16 16.800L12.500 18.800L11.800 16.500H8.200L7.500 18.800L4 16.800L5.500 14.700L3.700 11.700L1 12V8L3.700 8.300L5.500 5.300L4 3.200Z" stroke-linejoin="round"/><circle cx="10" cy="10" r="3"/></svg></div>
  </aside>
</main>

<footer class="status">
  <span>Page 4 of 5</span>
  <div class="zoom"><b>-</b><svg width="100" height="12" viewBox="0 0 100 12"><path d="M0 6.500H100" stroke="#605e5c"/><path d="M50.500 4V9" stroke="#605e5c"/><rect x="31" y="1" width="4" height="11" fill="#605e5c"/></svg><b>+</b><span>69%</span><svg width="16" height="12" viewBox="0 0 16 12" fill="none" stroke="#666"><rect x=".5" y=".5" width="15" height="11"/><path d="M3 5V3H5.500M10.500 3H13V5M13 7.500V9.500H10.500M5.500 9.500H3V7.500" stroke="#8a5a90"/></svg></div>
</footer>

<div class="taskbar">
  <svg class="k-wid" width="24" height="22" viewBox="0 0 24 22"><rect width="24" height="22" rx="1.500" fill="#0f6cbd"/><rect x="2" y="2" width="9" height="18" rx="1" fill="#f3f3f3"/><rect x="13" y="2" width="9" height="10" fill="#60d4ff"/><rect x="13" y="12" width="9" height="4" fill="#29a8f5"/><rect x="13" y="16" width="9" height="4" fill="#0c86e4"/></svg>
  <svg class="k-start" width="23" height="23" viewBox="0 0 23 23" fill="url(#gWin)"><path d="M0 1Q0 0 1 0H11V11H0ZM12 0H22Q23 0 23 1V11H12ZM0 12H11V23H1Q0 23 0 22ZM12 12H23V22Q23 23 22 23H12Z"/></svg>
  <div class="k-search"><svg width="17" height="17"><use href="#lens"/></svg><span>Search</span>
    <svg width="44" height="24" viewBox="0 0 44 24"><path d="M5 9V22H15V9" fill="#dbe2e6"/><path d="M3 8H17V10H3Z" fill="#dbe2e6"/><path d="M6 14H14V21H6Z" fill="#f3c738"/><circle cx="7" cy="4" r="1" fill="#8ab"/><circle cx="11" cy="2" r="1" fill="#8ab"/><path d="M21 1H27V3H26V11L31 22Q31 23 29 23H19Q17 23 17 22L22 11V3H21Z" fill="#a8dcb8"/><path d="M21 13H27L31 22Q31 23 29 23H19Q17 23 17 22Z" fill="#26ae52"/><path d="M35 3L37 1H40V11Q43 13 43 17Q43 23 37.500 23T32 17Q32 13 36 11V4Z" fill="#b8cad4"/><path d="M32.500 16H42.500Q42.500 23 37.500 23T32.500 16Z" fill="#e8484d"/></svg>
  </div>
  <div class="apps">
    <div><svg viewBox="0 0 24 24"><rect x="0" y="7" width="17" height="15" fill="#696969"/><rect x="6" y="1" width="18" height="16" fill="#eee"/><rect x="6" y="7" width="11" height="10" fill="#aaa"/></svg></div>
    <div><svg viewBox="0 0 24 24"><path d="M12 1C18.500 1 23.500 6 23.500 12S18.500 23 12 23C10 23 8 23 6.500 22Q4 23.500 1.500 23Q2.500 20 1.500 17Q.500 15 .500 12C.500 6 5.500 1 12 1Z" fill="url(#gChat)"/><rect x="5.500" y="7.500" width="9" height="9" rx="1.500" fill="#fff"/><path d="M15.500 11L19 8V16L15.500 13Z" fill="#fff"/></svg></div>
    <div><svg viewBox="0 0 24 24"><circle cx="12" cy="12" r="11.500" fill="url(#gEdge)"/><path d="M.5 12C2 6 8 5 12 8Q15 11 13.500 14C13 17 18 18.500 22 16C17 24 6 24 7 14Q8 10 11 9Q6 7 .5 12Z" fill="#0c59a4"/><path d="M13 14Q12.500 18 22 16.500Q24.500 13 23 11Q22 16 16 15.500Z" fill="#202020"/></svg></div>
    <div><svg viewBox="0 0 24 24"><path d="M7.500 7V1.500H16.500V7" fill="none" stroke="#35b3ee" stroke-width="2"/><path d="M.5 6H23.500V21Q23.500 23.500 21 23.500H3Q.500 23.500 .500 21Z" fill="url(#gStore)"/><path d="M7 10h4v4H7z" fill="#f25022"/><path d="M12.500 10h4v4h-4z" fill="#7fba00"/><path d="M7 15.500h4v4H7z" fill="#00a4ef"/><path d="M12.500 15.500h4v4h-4z" fill="#ffb900"/></svg></div>
    <div><svg viewBox="0 0 24 24"><path d="M0 2H8L11 5H24V10H0Z" fill="#d99514"/><path d="M0 6H24V22H0Z" fill="#fcd053"/><path d="M5 22V18Q5 16 7 16H17Q19 16 19 18V22Z" fill="#1178ce"/></svg></div>
    <div class="run"><svg viewBox="0 0 24 24"><circle cx="12" cy="12" r="11.500" fill="#e33b2e"/><path d="M2 6.300L7 15L12 17.500L8.500 23A11.500 11.500 0 0 1 2 6.300Z" fill="#25a04a"/><path d="M8 15L10.500 23.400L14 17.500Z" fill="#25a04a"/><path d="M12 6.500H22A11.500 11.500 0 0 1 10.500 23.400L17 14.500Z" fill="#fccb1f"/><circle cx="12" cy="12" r="5.800" fill="#fff"/><circle cx="12" cy="12" r="4.500" fill="#3b7de8"/></svg></div>
    <div class="run"><svg viewBox="0 0 24 24"><path d="M6 1H24V7H6Z" fill="#41a5ee"/><path d="M6 7H24V12H6Z" fill="#2b7cd3"/><path d="M6 12H24V18H6Z" fill="#185abd"/><path d="M6 18H24V23H6Z" fill="#103f91"/><rect x="0" y="6" width="12" height="12" rx="1" fill="#185abd"/><path d="M2.500 9L4.300 15L6 9.500L7.700 15L9.500 9" fill="none" stroke="#fff" stroke-width="1.300"/></svg></div>
    <div class="run act"><svg viewBox="0 0 24 24"><path d="M12 0H21V24H12Z" fill="#d6900f"/><path d="M7 6H16V24H7Z" fill="url(#gPbi)"/><path d="M2 12H10V24H2Z" fill="#f7dc72"/></svg></div>
  </div>
  <div class="tray">
    <svg width="12" height="8" viewBox="0 0 12 8"><path d="M.7 7L6 1.500L11.300 7" fill="none" stroke="#fff" stroke-width="1.300"/></svg>
    <div class="lang">ENG<br>INTL</div>
    <svg width="66" height="18" viewBox="0 0 66 18" fill="none" stroke="#fff" stroke-width="1.100"><path d="M9 16.500A7.500 7.500 0 1 1 16.500 8M2 6H16M2 12H8M9 1.500Q4.500 9 8.500 16.500M9 1.500Q12.500 5 12.500 8"/><circle cx="13" cy="12.800" r="4"/><path d="M10.300 15.500L15.800 10M25.500 7H28.500L32 3.500V14.500L28.500 11H25.500ZM34.500 6.500Q36 9 34.500 11.500M37 4.500Q39.800 9 37 13.500M39.500 3Q43 9 39.500 15M57 4.500H62.500V13.500H54M63 7.500H65V10.500H63"/><path d="M49 14Q48 6 55 4Q56 11 51 12.500L49.500 14Z" fill="#fff"/></svg>
    <div class="clock">2:11 PM<br>11/7/2024</div>
    <div class="badge">3</div>
  </div>
</div>
</body>
</html>
```
FILE: styles.css
```css
* { box-sizing: border-box; }
body { margin: 0; width: 1366px; height: 768px; overflow: hidden; display: flex; flex-direction: column; font: 11.5px/16px "Open Sans", "Noto Sans", sans-serif; color: #323130; background: #fafafa; }
svg { display: block; flex: none; }
.defs { position: absolute; }
.dn { display: inline-block; width: 8px; height: 6px; vertical-align: 0; margin-left: 2px; }

.titlebar { flex: none; height: 34px; background: #3b3a39; color: #fff; display: flex; align-items: center; padding-left: 17px; }
.t-undo { margin-left: 15px; }
.t-redo { margin-left: 15px; }
.t-name { width: 252px; margin: 6px 5px 0 9px; white-space: nowrap; letter-spacing: -.04px; }
.t-search { margin-left: 206px; width: 400px; height: 24px; border-radius: 2px; background: #d3d2d0; color: #444; display: flex; align-items: center; padding: 0 0 0 16px; gap: 10.500px; font-size: 12.700px; }
.t-sign { margin-left: 177.500px; margin-top: 1px; width: 38px; white-space: nowrap; }
.t-avatar { margin-left: 8.500px; }
.t-win { margin-left: 32px; }

.tabs { flex: none; height: 32px; display: grid; grid-template-columns: 58px 70px 66px 91px 61px 88px 1fr 90px; padding-left: 22.500px; font-size: 13.2px; color: #252423; align-items: start; }
.tabs > span { padding-top: 8px; height: 31px; }
.tabs b { display: inline-block; height: 23px; border-bottom: 3px solid #117865; font-weight: 700; letter-spacing: -.3px; }
.share { width: 84px; height: 24px; margin-top: 4px; border: 0; border-radius: 3px; background: #117865; color: #fff; font: 12px/16px "Open Sans", sans-serif; display: flex; align-items: center; padding: 1px 0 0 7px; gap: 6px; }
.share span { width: 29px; margin-left: 2px; letter-spacing: -.4px; }

.ribbon { flex: none; height: 94px; display: flex; padding-top: 4px; }
.group { border-right: 1px solid #d2d0ce; height: 89px; display: flex; flex-direction: column; }
.tools { display: flex; height: 78px; }
.caption { text-align: center; font-size: 9.700px; line-height: 12px; height: 11px; letter-spacing: .02px; }
.g-clip { width: 81px; } .g-data { width: 309px; } .g-query { width: 117px; } .g-insert { width: 409px; }
.g-calc { width: 188px; } .g-sens { width: 74px; } .g-share { width: 59px; } .g-copilot { width: 60px; }
.big { display: flex; flex-direction: column; align-items: center; width: 54px; padding-top: 5px; white-space: nowrap; text-align: center; letter-spacing: -.15px; }
.big > svg { height: 34px; margin-bottom: 1px; }
.big.off { color: #b8b6b4; }
.g-clip .big { margin-left: 1px; }
.g-clip .big > svg { margin-left: 4px; }
.getdata { padding-left: 3px; }
.getdata > svg { margin-left: 5px; }
.mini { display: flex; flex-direction: column; gap: 7px; padding-top: 4px; margin-left: -3px; }
.mini svg:first-child { margin-left: 1px; }
.list { display: flex; flex-direction: column; width: 128px; padding-top: 1px; letter-spacing: -.12px; }
.list > div { height: 24px; display: flex; align-items: center; gap: 3px; white-space: nowrap; }
.first { width: 133px; flex: none; }
.first > div > svg:first-child { margin-left: -1px; }
.first > div { padding-left: 1.500px; }
.first .dn { margin-left: 2px; }
.second > div > span { letter-spacing: -.1px; }
.second .dn { margin-left: 2px; }
.w56 { width: 56px; margin-left: 8px; letter-spacing: -.35px; } .w44 { width: 44px; } .w40 { width: 40px; margin-left: 7px; }
.w36 { width: 36px; margin-left: 6px; } .w50 { width: 50px; margin-left: 1px; } .w68 { width: 68px; margin-left: 10px; }
.w46 { width: 46px; letter-spacing: -.3px; } .ml4 { margin-left: 4px; } .ml3 { margin-left: 3px; } .fill { width: 100%; }
.gallery { margin: 7px 0 0 5px; width: 254px; height: 62px; border: 1px solid #8a8886; background: #fff; display: flex; }
.cells { width: 237px; display: grid; grid-template-columns: repeat(9, 26px); grid-template-rows: 29px 29px; padding: 1px 0 0 1px; }
.cells svg { width: 18px; height: 18px; margin: 5px 4px; }
.more { flex: 1; border-left: 1px solid #8a8886; display: flex; align-items: center; padding-top: 7px; }
.more .dn { margin-left: 2px; }
.n123 { font: 700 7px "Open Sans", sans-serif; fill: #1c7fc9; text-anchor: middle; letter-spacing: 0; }
.fx { font: italic 19px "Liberation Serif", serif; fill: #999; letter-spacing: -.5px; }
.collapse { margin-left: auto; padding: 78px 5px 0 0; }

.work { flex: none; height: 535px; display: flex; }
.rail { width: 41px; background: #f3f2f1; border-right: 1px solid #e1dfdd; }
.rail > div { height: 40px; display: flex; align-items: center; justify-content: center; }
.rail > div + div { padding-left: 1px; }
.rail .cur { border-left: 3px solid #117865; padding-right: 2px; }
.dax { font: 700 7px "Open Sans", sans-serif; fill: #777; stroke: #f3f2f1; stroke-width: 2px; paint-order: stroke; }
.center { width: 1111px; display: flex; flex-direction: column; }
.stage { height: 500px; display: flex; background: #3a3a3a; }
.canvas { width: 1078px; overflow: hidden; padding-left: 95px; }
.page { position: relative; width: 888px; height: 500px; background: #3a3a3a; box-shadow: 0 0 9px 1px #999; clip-path: inset(0 -12px); }
.visual { position: absolute; font: 9.3px/12px "Liberation Sans", Arial, sans-serif; color: #fff; }
table { border-collapse: separate; border-spacing: 0; table-layout: fixed; font: inherit; }
th, td { padding: 0; white-space: nowrap; overflow: hidden; }
th { font-weight: 400; }
.grid th, .grid td { text-align: right; padding-right: 4px; }
.grid th:first-child, .grid td:first-child { text-align: left; padding: 0 0 0 4px; }
.grid thead th { height: 24px; border-bottom: 1px solid #2d4c66; }
.grid tbody td { height: 11.780px; line-height: 11.780px; }
.grid tbody td:first-child { border-right: 1px solid #2d5b86; }
.grid td:last-child, .grid .sum td, .flat .sum td, .grid th:last-child { font-weight: 700; letter-spacing: -.1px; }
tbody tr:nth-child(even):not(.sum) td { background: #484848; }
.jobs { left: 3px; top: 33.400px; width: 392px; }
.jobs col:nth-child(1) { width: 119px; } .jobs col:nth-child(2) { width: 56px; } .jobs col:nth-child(3) { width: 45px; } .jobs col:nth-child(4) { width: 77px; } .jobs col:nth-child(5) { width: 66px; } .jobs col:nth-child(6) { width: 29px; }
.edu { left: 3px; top: 228.200px; width: 359px; }
.edu col:nth-child(1) { width: 85px; } .edu col:nth-child(2) { width: 57px; } .edu col:nth-child(3) { width: 45px; } .edu col:nth-child(4) { width: 77px; } .edu col:nth-child(5) { width: 66px; } .edu col:nth-child(6) { width: 29px; }
.s-head { display: flex; justify-content: space-between; align-items: center; height: 20px; padding: 0 2px; font-weight: 700; font-size: 10.400px; }
.s-head svg { margin-top: 1px; color: #ccc; }
.s-box { height: 18px; border: 1px solid #aaa; outline: 1px solid #666; outline-offset: -2px; display: flex; justify-content: space-between; align-items: center; padding: 0 3px; color: #d2d0ce; }
.s-job { left: 404px; top: 35px; width: 129px; } .s-job .s-head { padding-bottom: 2px; }
.s-edu { left: 386px; top: 230px; width: 112px; } .s-edu .s-head { padding-bottom: 2px; }
.marital { left: 594px; top: 35px; width: 240px; }
.marital h2 { margin: 0 0 4px .5px; font: 14.400px/14px "Liberation Serif", serif; white-space: nowrap; -webkit-text-stroke: .25px #fff; }
.flat { width: 239px; margin-left: .5px; }
.flat col:nth-child(1) { width: 98px; } .flat col:nth-child(2) { width: 102px; } .flat col:nth-child(3) { width: 39px; }
.flat th, .flat td { text-align: right; padding-right: 3px; }
.flat th:last-child, .flat td:last-child { text-align: left; padding: 0 0 0 4px; }
.flat th { height: 19px; border-bottom: 1px solid #2d5b86; vertical-align: top; line-height: 14px; }
.flat td { height: 12.300px; line-height: 12.300px; }
.flat tr:nth-child(4) td { border-bottom: 1px solid #2d5b86; }
.flat i { display: block; width: 0; margin: -1px 0 0 4px; border: 3.500px solid transparent; border-top: 0; border-bottom: 3px solid #fff; }
.filters { width: 33px; border-left: 1px solid #777; color: #fff; display: flex; flex-direction: column; align-items: center; padding-top: 12px; }
.filters svg + svg { margin: 15px 0 0 4px; }
.filters span { writing-mode: vertical-rl; font: 700 14px/18px "Open Sans", sans-serif; letter-spacing: -.2px; margin: 7px 2px 0 0; }
.pages { height: 35px; background: #f3f2f1; display: flex; }
.dev { width: 24px; display: flex; justify-content: center; align-items: start; padding-top: 6px; margin-left: 10px; }
.dev + .dev { margin-left: 20px; padding-top: 5px; width: 24px; }
.dev.on { height: 31px; border-bottom: 3px solid #117865; }
.arrows { margin: 14px 6px 0 15px; }
.pt { width: 76.400px; background: #fff; border-left: 1px solid #c8c6c4; text-align: center; line-height: 37px; font-size: 11.700px; letter-spacing: -.08px; }
.sel { border-bottom: 4px solid #117865; font-weight: 600; letter-spacing: -.2px; }
.add { width: 39px; background: #117865; display: flex; align-items: center; justify-content: center; }

.data { width: 182px; background: #f3f2f1; border-left: 1px solid #e1dfdd; border-right: 1px solid #e1dfdd; }
.d-head { height: 45px; display: flex; align-items: center; padding: 0 8px 7px 8px; gap: 7px; }
.d-head b { font-size: 14.300px; margin-right: auto; font-weight: 700; letter-spacing: -.1px; }
.d-search { margin-left: 4px; width: 172px; height: 24px; border: 1px solid #c8c6c4; border-bottom: 1.500px solid #666; border-radius: 4px; background: #fff; display: flex; align-items: center; padding: 1px 0 0 12px; gap: 7px; font-size: 12.700px; color: #605e5c; }
.d-body { margin-top: 13px; height: 445px; display: flex; overflow: hidden; }
.tree { width: 168px; white-space: nowrap; letter-spacing: -.08px; }
.tree > div { height: 24px; display: flex; align-items: center; }
.tree span { margin-top: 1px; }
.ch { width: 12px; height: 12px; margin: 0 3px 0 13px; fill: none; stroke: #777; stroke-width: 1.200; }
.tg { width: 14px; height: 14px; margin-right: 5px; }
.fd i { flex: none; width: 12px; height: 12px; border: 1px solid #8a8886; border-radius: 2px; margin: 0 8px 0 44px; }
.fd svg { width: 12px; height: 14px; margin-right: 6px; }
.bar { width: 8px; height: 132px; margin-top: 21px; background: #c8c8c8; }
.panes { width: 32px; background: #faf9f8; display: flex; flex-direction: column; }
.panes > div { height: 32px; display: flex; align-items: center; justify-content: center; }
.panes .p-on { background: #e1dfdd; border: 1px solid #605e5c; }
.panes .gear { margin-top: auto; border-top: 1px solid #e1dfdd; }

.status { flex: none; height: 24px; background: #f3f2f1; border-top: 1px solid #e1dfdd; display: flex; align-items: center; justify-content: space-between; padding: 1px 18px 0 4px; color: #484644; }
.status > span { padding-top: 2px; letter-spacing: -.02px; }
.zoom { display: flex; align-items: center; color: #605e5c; }
.zoom b { width: 9px; font-size: 13px; font-weight: 600; }
.zoom b + span { width: 30px; margin-left: 13px; margin-right: 12px; }
.zoom svg + b { width: 9px; margin-left: 5px; }

.taskbar { flex: none; height: 49px; background: #202020; border-top: 1px solid #000; color: #fff; display: flex; align-items: center; }
.k-wid { margin-left: 16px; }
.k-start { margin-left: 344px; }
.k-search { margin-left: 13px; width: 220px; height: 32px; border-radius: 16px; background: #383838; display: flex; align-items: center; padding-left: 10px; font-size: 12.600px; color: #d6d6d6; }
.k-search span { margin-left: 10px; width: 43px; }
.k-search svg:last-child { margin-left: 86px; }
.apps { display: flex; gap: 4px; margin-left: 4px; }
.apps > div { width: 40px; height: 40px; display: flex; flex-direction: column; align-items: center; padding-top: 8px; border-radius: 4px; }
.apps svg { width: 24px; height: 24px; }
.apps .run::after { content: ""; width: 6px; height: 3px; border-radius: 2px; background: #999; margin-top: 4px; }
.apps .act { background: #2d2d2d; border: 1px solid #383838; padding-top: 7px; }
.apps .act::after { width: 16px; background: #4cc2ff; }
.tray { margin-left: auto; padding-right: 20px; display: flex; align-items: center; font-size: 11.200px; }
.lang { width: 26px; margin-left: 20px; text-align: left; padding-top: 1px; }
.tray svg + .lang + svg { margin-left: 14px; }
.clock { width: 56px; text-align: right; margin-left: 10px; white-space: nowrap; letter-spacing: -.1px; }
.badge { width: 16px; height: 16px; border-radius: 50%; background: #4cc2ff; color: #111; text-align: center; margin-left: 8px; font-size: 10px; }
```
